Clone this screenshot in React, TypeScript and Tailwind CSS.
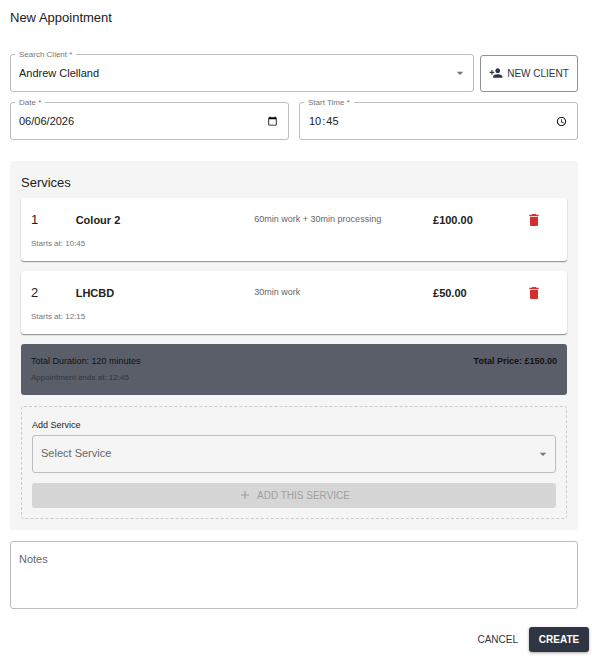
import React, { useState } from 'react';
import { MdAdd, MdArrowDropDown, MdDelete, MdPersonAdd } from 'react-icons/md';

const initialServices = [
  { id: 1, name: 'Colour 2', timing: '60min work + 30min processing', price: 100, startsAt: '10:45' },
  { id: 2, name: 'LHCBD', timing: '30min work', price: 50, startsAt: '12:15' },
];

const fieldClass =
  'block h-[38px] w-full rounded-[3px] border border-[#bdbdbd] bg-transparent pr-[10px] pl-2 text-[11px] outline-none focus:border-[#2f3542]';

const pickerClass =
  '[&::-webkit-datetime-edit-fields-wrapper]:p-0 [&::-webkit-datetime-edit-day-field]:p-0 [&::-webkit-datetime-edit-month-field]:p-0 [&::-webkit-datetime-edit-year-field]:p-0 [&::-webkit-datetime-edit-ampm-field]:hidden [&::-webkit-calendar-picker-indicator]:size-[11px] [&::-webkit-calendar-picker-indicator]:p-0';

function OutlinedField({ id, label, children }: { id: string; label: string; children: React.ReactNode }) {
  return (
    <div className="relative min-w-0 flex-1">
      <label htmlFor={id} className="absolute -top-1 left-[5px] bg-white px-1 text-[8px] leading-[10px] text-[#757575]">
        {label} *
      </label>
      {children}
    </div>
  );
}

export default function App() {
  const [client, setClient] = useState('Andrew Clelland');
  const [date, setDate] = useState('2026-06-06');
  const [time, setTime] = useState('10:45');
  const [services, setServices] = useState(initialServices);
  const [selected, setSelected] = useState('');
  const [notes, setNotes] = useState('');

  const total = services.reduce((sum, s) => sum + s.price, 0);

  return (
    <form
      className="bg-white font-['Liberation_Sans',Arial,sans-serif] text-[#212121]"
      onSubmit={(e) => e.preventDefault()}
    >
      <div className="pr-[14px] pl-[10px]">
        <h1 className="pt-2 text-[13px] leading-5">New Appointment</h1>

        <div className="mt-[26px] flex items-end gap-[6px]">
          <OutlinedField id="client" label="Search Client">
            <input
              id="client"
              type="text"
              required
              className={fieldClass}
              value={client}
              onChange={(e) => setClient(e.target.value)}
            />
            <MdArrowDropDown className="pointer-events-none absolute top-[11px] right-[6px] size-4 text-[#757575]" />
          </OutlinedField>
          <button
            type="button"
            className="flex h-[37px] w-[98px] items-center justify-center gap-1 rounded-[3px] border border-[#8e919b] pb-px text-[10px] text-[#2f3542]"
          >
            <MdPersonAdd className="size-[14px]" />
            NEW CLIENT
          </button>
        </div>

        <div className="mt-[10px] flex gap-[10px]">
          <OutlinedField id="date" label="Date">
            <input
              id="date"
              type="date"
              required
              className={`${fieldClass} ${pickerClass}`}
              value={date}
              onChange={(e) => setDate(e.target.value)}
            />
          </OutlinedField>
          <OutlinedField id="time" label="Start Time">
            <input
              id="time"
              type="time"
              required
              className={`${fieldClass} ${pickerClass}`}
              value={time}
              onChange={(e) => setTime(e.target.value)}
            />
          </OutlinedField>
        </div>

        <section className="mt-[21px] rounded-[3px] bg-[#f5f5f5] px-[11px] pt-3 pb-[11px]">
          <h2 className="mb-[5px] text-[13px] leading-5">Services</h2>

          <ul className="flex flex-col gap-[10px]">
            {services.map((service, index) => (
              <li
                key={service.id}
                className="h-[63px] rounded-[3px] bg-white px-[10px] pt-[10px] shadow-[0_1px_1px_rgba(0,0,0,0.35),0_1px_2px_rgba(0,0,0,0.12)]"
              >
                <div className="grid grid-cols-12 gap-x-[10px]">
                  <span className="text-[13px] leading-6">{index + 1}</span>
                  <span className="col-span-4 text-[11px] leading-6 font-bold">{service.name}</span>
                  <span className="col-span-4 text-[9px] leading-[22px] whitespace-nowrap text-[#666666]">
                    {service.timing}
                  </span>
                  <span className="col-span-2 text-[11px] leading-6 font-bold">£{service.price.toFixed(2)}</span>
                  <button
                    type="button"
                    aria-label={`Remove ${service.name}`}
                    className="flex size-6 items-center justify-center text-[#d32f2f]"
                    onClick={() => setServices(services.filter((s) => s.id !== service.id))}
                  >
                    <MdDelete className="size-4" />
                  </button>
                </div>
                <p className="mt-[7px] text-[8px] leading-[10px] text-[#757575]">Starts at: {service.startsAt}</p>
              </li>
            ))}
          </ul>

          <div className="mt-[10px] flex h-[51px] items-start justify-between rounded-[3px] bg-[#5a5e69] p-[10px] text-[9px] leading-[14px] text-[#111111]">
            <div>
              <p>Total Duration: 120 minutes</p>
              <p className="mt-[5px] text-[8px] leading-[10px] text-[#33363d]">Appointment ends at: 12:45</p>
            </div>
            <p className="font-bold">Total Price: £{total.toFixed(2)}</p>
          </div>

          <div className="mt-[11px] rounded-[3px] border border-dashed border-[#cccccc] p-[10px]">
            <label htmlFor="service" className="block pt-px pb-[3px] text-[9px] leading-[14px]">
              Add Service
            </label>
            <div className="relative">
              <select
                id="service"
                className={`${fieldClass} appearance-none pb-px text-[#666666]`}
                value={selected}
                onChange={(e) => setSelected(e.target.value)}
              >
                <option value="">Select Service</option>
                <option value="colour-2">Colour 2</option>
                <option value="lhcbd">LHCBD</option>
              </select>
              <MdArrowDropDown className="pointer-events-none absolute top-[11px] right-[5px] size-4 text-[#757575]" />
            </div>
            <button
              type="button"
              disabled={!selected}
              className="mt-[10px] flex h-[25px] w-full items-center justify-center gap-[5px] rounded-[3px] bg-[#2f3542] pb-px text-[10px] text-white disabled:bg-[#d6d6d6] disabled:text-[#a0a0a0]"
            >
              <MdAdd className="size-[14px]" />
              ADD THIS SERVICE
            </button>
          </div>
        </section>

        <textarea
          aria-label="Notes"
          placeholder="Notes"
          className="mt-[11px] block h-[68px] w-full resize-none rounded-[3px] border border-[#bdbdbd] px-2 py-[9px] text-[11px] leading-4 outline-none placeholder:text-[#666666]"
          value={notes}
          onChange={(e) => setNotes(e.target.value)}
        />
      </div>

      <div className="mt-[18px] flex justify-end gap-[6px] pr-[3px] pb-[5px] text-[10px]">
        <button type="button" className="h-[25px] px-[5px] pb-px text-[#2f3542]">
          CANCEL
        </button>
        <button
          type="submit"
          className="h-[25px] w-[60px] rounded-[3px] bg-[#2f3542] pb-px font-bold text-white shadow-[0_1px_3px_rgba(0,0,0,0.35)]"
        >
          CREATE
        </button>
      </div>
    </form>
  );
}
